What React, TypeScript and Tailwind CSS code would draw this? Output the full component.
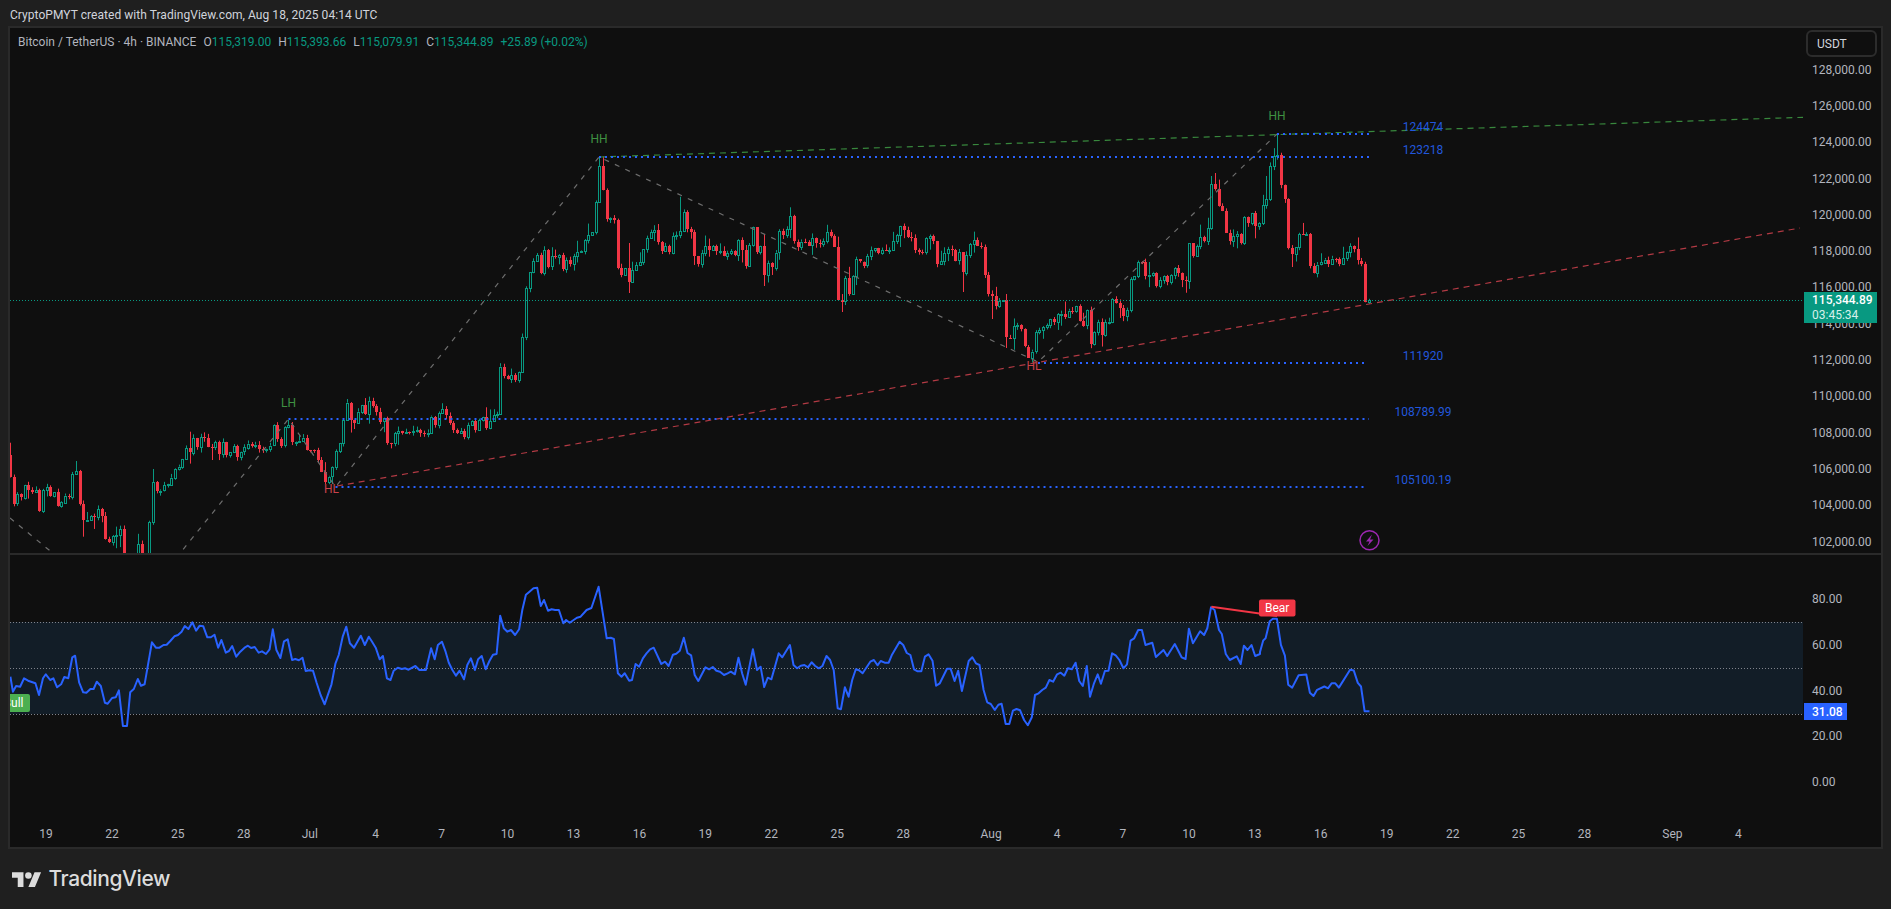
const FONT = 'font-["Roboto","Liberation_Sans",sans-serif]'

// closes read off the chart, per stretch of bars: y = y0 + v * s
const STRETCHES: { x0: number; y0: number; s: number; v: number[] }[] = [
  { x0: 10, y0: 400, s: 1 / 3, v: [
    230,310,283,293,255,270,275,270,332,270,262,288,277,318,307,287,290,222,214,312,360,359,348,350,327,348,416,426,408,405,388,470,
    520,540,500,432,470,465,367,247,275,272,256,253,233,207,200,177,145,158,114,142,112,113,140,141,127,162,127,165,157,138,170,155,
    142,131,137,134,146,147,146,137,76,117,137,82,76,127,125,122,113,150,150,150,180,215,245,230,202,153,130,60,8,60,68,35,15,42,3,17,
    35,65,55,130,131,100,93,100,97,98,94,90,100,100,98,50,75,40,28,47,68,
  ] },
  { x0: 453.3, y0: 0, s: 1, v: [430,433,431,437,425,421,430,420,417,428,421,415,414] },
  { x0: 500.3, y0: 150, s: 1 / 3, v: [
    650,678,688,676,690,667,562,415,367,333,316,369,300,350,319,321,316,357,330,342,319,307,304,271,255,247,157,48,120,207,204,210,
    353,375,355,396,360,346,336,298,265,247,240,276,303,289,308,258,256,244,186,238,246,318,342,310,289,300,289,305,304,318,310,304,
    315,270,300,348,286,232,306,289,375,340,
  ] },
  { x0: 772, y0: 190, s: 1 / 3, v: [
    232,188,124,137,118,79,155,170,155,155,167,145,160,163,154,126,137,170,330,335,265,312,258,208,215,227,199,181,175,190,180,182,181,
    154,136,108,119,141,143,179,185,185,144,138,154,222,214,190,178,180,212,187,248,195,163,151,168,170,254,311,317,347,333,331,443,443,
    408,405,418,470,503,485,427,421,412,405,388,397,373,371,380,362,363,348,392,407,361,464,427,397,435,396,395,
  ] },
  { x0: 1112.3, y0: 130, s: 1 / 3, v: [
    507,518,533,558,540,448,438,396,397,438,434,428,468,451,438,456,436,415,430,450,453,340,378,349,322,333,295,163,177,227,243,308,333,
    319,313,340,262,279,250,288,280,226,208,108,78,76,165,207,353,372,352,312,313,312,407,427,404,397,389,400,386,387,402,385,367,349,
    358,392,401,515,510,
  ] },
]

// long wicks that stand out: [x, high, low]
const WICKS: [number, number | null, number | null][] = [
  [75.7, 461, null], [83, null, 536.7], [152, 469, null], [189, 431.7, null], [211, null, 460], [288.7, 420, null], [332.7, null, 484],
  [600, 157, null], [629, 243, 293], [680, 196.7, null], [764.6, null, 286], [841, null, 312], [962, null, 292], [991, null, 319],
  [1006, 294, 348], [1032, null, 362.5], [1211, 176, null], [1215, 173, null], [1266, 176, null], [1277, 135, null], [1292, null, 267],
]

type Bar = { x: number; o: number; c: number; hi: number; lo: number }

function buildBars() {
  let seed = 7
  const rnd = () => (seed = (seed * 16807) % 2147483647) / 2147483647
  const wick = () => { const a = rnd(), b = rnd(); return a < 0.15 ? 4 + b * 9 : b * 4 }
  const bars: Bar[] = []
  let prev = 455
  STRETCHES.forEach(st => st.v.forEach((n, i) => {
    const c = st.y0 + n * st.s
    bars.push({ x: st.x0 + i * 3.664, o: prev, c, hi: Math.min(prev, c) - wick(), lo: Math.max(prev, c) + wick() })
    prev = c
  }))
  WICKS.forEach(([x, hi, lo]) => {
    const b = bars.reduce((m, r) => (Math.abs(r.x - x) < Math.abs(m.x - x) ? r : m), bars[0])
    if (hi !== null) b.hi = hi
    if (lo !== null) b.lo = lo
  })
  return bars
}

const BARS = buildBars()

const RSI_A = [26,290,32,335,40,318,50,320,60,295,70,302,88,310,97,345,107,295,114,283,125,300,133,295,142,322,152,313,160,291,170,295,180,232,187,227,197,307,207,337,215,338,225,327,233,327,241,305,251,318,261,368,268,371,279,354,288,352,296,331,306,438,316,438,324,337,333,327,343,297,351,317,360,313,378,187,388,203,397,203,407,195,415,194,424,183,434,169,443,165,452,155,460,138,469,147,479,127,488,152,497,137,506,139,516,172,525,172,534,164,543,203,551,180,562,218,570,213,578,198,588,230,598,215,610,202,617,197,625,204,634,201,644,218,652,214,662,222,671,208,679,148,688,210,698,234,707,184,716,178,727,240,735,237,744,241,753,233,761,273,770,271,779,272,788,308,798,345,808,373,825,313,835,250,843,225,853,170,862,140,871,190,881,203,898,167,908,195,918,170,925,183,935,203,945,238,953,228,963,295,972,300,980,272,990,263,1000,267,1008,265,1017,269,1034,258,1044,270,1060,270,1073,205,1082,238,1090,195,1100,185,1109,215,1117,248,1126,270,1135,287,1144,272,1155,298,1163,255,1172,235,1182,270,1190,238,1199,228,1209,268,1218,243,1227,224,1236,222,1245,107,1254,145,1263,155,1272,150,1282,165,1292,148,1300,90,1309,44,1318,35,1328,25,1337,23,1346,78,1354,60,1364,92,1373,88,1382,90,1391,90,1402,130,1409,120,1418,128,1436,113,1445,110,1460,90,1472,84,1490,20,1510,175,1520,173,1528,177,1538,280,1547,290,1555,280,1566,302]
const RSI_B = [5,300,14,252,23,260,32,235,41,220,50,208,59,203,78,252,87,245,96,258,107,224,115,221,124,212,134,173,143,219,152,226,161,285,170,303,188,262,197,268,206,261,215,272,224,275,234,285,243,280,251,275,261,283,270,233,279,280,288,314,306,208,316,270,325,260,334,321,343,293,352,298,370,220,379,232,398,195,407,255,416,265,425,257,434,255,443,262,452,247,461,258,470,265,479,258,489,228,498,240,507,270,517,385,525,388,535,322,544,350,553,300,562,268,570,271,579,280,598,245,607,240,616,256,624,243,634,248,644,248,652,224,671,185,680,195,689,219,698,225,707,268,716,274,725,274,734,230,743,223,753,242,762,317,771,310,789,266,798,266,808,303,817,272,826,333,843,243,852,232,861,250,870,255,880,330,889,367,898,372,908,390,917,374,925,371,935,432,944,432,953,392,962,387,971,391,981,420,990,436,1000,412,1008,345,1017,340,1026,330,1035,323,1044,300,1053,305,1063,283,1072,278,1081,287,1090,265,1100,268,1109,248,1118,303,1127,318,1137,258,1145,350,1155,310,1164,283,1172,311,1182,273,1191,272,1200,220,1209,226,1218,240,1228,265,1237,253,1246,182,1255,175,1265,150,1274,150,1283,195,1300,188,1309,231,1328,210,1337,228,1356,192,1373,232,1383,237,1391,146,1401,190,1419,154,1429,165,1437,145,1446,82,1455,90,1466,150,1473,162,1483,222,1493,240,1510,229,1520,252,1528,197,1537,210,1547,195,1556,228,1568,222]
const RSI_C = [0,860,8,828,14,822,24,775,32,768,42,768,52,840,62,870,70,950,80,958,96,924,115,922,124,972,133,981,142,964,160,955,169,960,178,946,187,946,196,958,224,909,233,911,243,945,251,955,260,1023,272,1023]

function rsiPath() {
  const pts: string[] = []
  const add = (arr: number[], fx: (n: number) => number, fy: (n: number) => number) => {
    for (let i = 0; i < arr.length; i += 2) pts.push(`${fx(arr[i]).toFixed(1)},${fy(arr[i + 1]).toFixed(1)}`)
  }
  add(RSI_A, n => n / 2.489, n => 580 + n / 3)
  add(RSI_B, n => 630 + n / 2.489, n => 580 + n / 3)
  add(RSI_C, n => 1260 + n / 2.485, n => 340 + n / 2.756)
  return 'M' + pts.join('L')
}

const PRICES = ['128,000.00','126,000.00','124,000.00','122,000.00','120,000.00','118,000.00','116,000.00','114,000.00','112,000.00','110,000.00','108,000.00','106,000.00','104,000.00','102,000.00']
const RSI_TICKS = ['80.00','60.00','40.00','20.00','0.00']
const LEVELS = [
  { x1: 1277, x2: 1369.5, y: 134, label: '124474', ty: 126.7 },
  { x1: 599, x2: 1369.5, y: 157, label: '123218', ty: 149.7 },
  { x1: 1038, x2: 1367, y: 363, label: '111920', ty: 355.6 },
  { x1: 288.5, x2: 1369, y: 419, label: '108789.99', ty: 411.5 },
  { x1: 335.5, x2: 1366, y: 487, label: '105100.19', ty: 479.7 },
]
const OHLC = [['O', '115,319.00'], ['H', '115,393.66'], ['L', '115,079.91'], ['C', '115,344.89']]

function Candles() {
  return (
    <>
      {BARS.map((b, i) => {
        const x = Math.round(b.x) + 0.5
        const up = b.c < b.o
        const top = Math.min(b.o, b.c)
        const h = Math.max(Math.abs(b.o - b.c), 1)
        return up ? (
          <g key={i} stroke="#089981" fill="none">
            <path d={`M${x} ${b.hi}V${top}M${x} ${top + h}V${b.lo}`} />
            <rect x={x - 1} y={Math.round(top) + 0.5} width={2} height={Math.max(Math.round(h), 1)} fill="#0f0f0f" />
          </g>
        ) : (
          <g key={i}>
            <path d={`M${x} ${b.hi}V${b.lo}`} stroke="#f23645" />
            <rect x={x - 1.5} y={Math.round(top)} width={3} height={Math.max(Math.round(h), 1)} fill="#f23645" />
          </g>
        )
      })}
    </>
  )
}

function MainChart() {
  return (
    <svg viewBox="10 28 1793 525" className="w-[1793px] h-[525px] shrink-0">
      <Candles />
      <path d="M10 300.5H1803" stroke="#089981" strokeDasharray="1 2" />
      <path d="M10 518L110 600L181 552L288.5 419L335.5 487L599 157L1038 362L1277 134" fill="none" stroke="#6e6e6e" strokeWidth={1.2} strokeDasharray="5 6.5" />
      <path d="M599 157L1803 117.3" stroke="#38883d" strokeWidth={1.2} strokeDasharray="6 5" />
      <path d="M337 486L1800 228" stroke="#b23a44" strokeWidth={1.2} strokeDasharray="6 5" />
      {LEVELS.map(l => (
        <g key={l.label}>
          <path d={`M${l.x1} ${l.y}H${l.x2}`} stroke="#2962ff" strokeWidth={2} strokeDasharray="2 4" />
          <text x={1423} y={l.ty + 4} textAnchor="middle" className="fill-[#2257dc] text-[12px]">{l.label}</text>
        </g>
      ))}
      <text x={599} y={143} textAnchor="middle" className="fill-[#3f9142] text-[12px]">HH</text>
      <text x={1277} y={120} textAnchor="middle" className="fill-[#3f9142] text-[12px]">HH</text>
      <text x={288.5} y={407} textAnchor="middle" className="fill-[#3f9142] text-[12px]">LH</text>
      <text x={331.5} y={493} textAnchor="middle" className="fill-[#c9424c] text-[12px]">HL</text>
      <text x={1034} y={370} textAnchor="middle" className="fill-[#c9424c] text-[12px]">HL</text>
      <circle cx={1369.5} cy={540.3} r={9.5} fill="none" stroke="#9c27b0" strokeWidth={1.5} />
      <path d="M1372 534.5L1366 541.5H1369.5L1367.5 546L1373.5 539.5H1370Z" fill="#9c27b0" />
    </svg>
  )
}

function RsiChart() {
  return (
    <svg viewBox="10 555 1793 265" className="w-[1793px] h-[265px] shrink-0">
      <rect x={10} y={622} width={1793} height={92} fill="#121d27" />
      {[622.5, 668.5, 714.5].map(y => (
        <path key={y} d={`M10 ${y}H1803`} stroke="#80838c" strokeDasharray="1 2" />
      ))}
      <path d={rsiPath()} fill="none" stroke="#2962ff" strokeWidth={2} strokeLinejoin="round" />
      <path d="M1211.4 606.7L1277 616" stroke="#f23645" strokeWidth={2} />
      <rect x={1259} y={599.5} width={36.5} height={17} rx={2} fill="#f23645" />
      <text x={1277.2} y={612} textAnchor="middle" className="fill-white text-[12px]">Bear</text>
      <rect x={0} y={694} width={30} height={18} rx={2} fill="#4caf50" />
      <text x={23.5} y={707} textAnchor="end" className="fill-white text-[12px]">Bull</text>
    </svg>
  )
}

function TimeAxis() {
  const cell = 'w-[65.95px] shrink-0 text-center'
  return (
    <div className="h-[27px] flex items-center pl-[3px] text-[#b2b5be] overflow-hidden">
      {['19','22','25','28','Jul','4','7','10','13','16','19','22','25','28'].map((t, i) => (
        <div key={i} className={cell}>{t}</div>
      ))}
      <div className="w-[22px] shrink-0" />
      {['Aug','4','7','10','13','16','19','22','25','28'].map((t, i) => (
        <div key={i} className={cell}>{t}</div>
      ))}
      <div className="w-[22px] shrink-0" />
      {['Sep','4'].map((t, i) => (
        <div key={i} className={cell}>{t}</div>
      ))}
    </div>
  )
}

export default function App() {
  return (
    <div className={`${FONT} h-[909px] bg-[#1f1f1f] flex flex-col overflow-hidden text-[12px]`}>
      <div className="h-[26px] flex items-center pl-[10px] pt-[4px] text-[#d1d4dc] tracking-[0.05px]">
        CryptoPMYT created with TradingView.com, Aug 18, 2025 04:14 UTC
      </div>

      <div className="ml-[8px] w-[1875px] h-[823px] border-2 border-[#2a2a2a] bg-[#0f0f0f] flex flex-col">
        <div className="relative h-[525px] flex shrink-0">
          <MainChart />
          <div className="flex-1 pt-[23.5px] text-[#b2b5be]">
            {PRICES.map(p => (
              <div key={p} className="h-[36.3px] flex items-center pl-[9px]">{p}</div>
            ))}
          </div>

          {/* legend, over the chart */}
          <div className="absolute top-[6px] left-[8px] h-[16px] flex items-center text-[#b2b5be]">
            <span className="mr-[7px]">Bitcoin / TetherUS · 4h · BINANCE</span>
            {OHLC.map(([k, v]) => (
              <span key={k} className="mr-[7px]">{k}<span className="text-[#089981]">{v}</span></span>
            ))}
            <span className="text-[#089981]">+25.89 (+0.02%)</span>
          </div>

          <div className="absolute top-[2px] left-[1796px] w-[71px] h-[27px] flex items-center pl-[9px] border-2 border-[#2c2c2c] rounded-md text-[#d1d4dc]">
            USDT
          </div>
          <div className="absolute top-[264px] left-[1794px] w-[73px] h-[31px] pl-[8px] bg-[#089981] flex flex-col justify-center leading-[15px]">
            <span className="text-white font-medium">115,344.89</span>
            <span className="text-[#d6f0ea]">03:45:34</span>
          </div>
        </div>

        <div className="h-[2px] bg-[#2a2a2a] shrink-0" />

        <div className="relative h-[265px] flex shrink-0">
          <RsiChart />
          <div className="flex-1 pt-[21.6px] text-[#b2b5be]">
            {RSI_TICKS.map(t => (
              <div key={t} className="h-[45.6px] flex items-center pl-[9px]">{t}</div>
            ))}
          </div>
          <div className="absolute top-[148px] left-[1794px] w-[43px] h-[17px] pl-[8px] flex items-center bg-[#2962ff] text-white font-medium">
            31.08
          </div>
        </div>

        <TimeAxis />
      </div>

      <div className="flex-1 flex items-center pl-[12px] gap-[7px] text-[#dcdcdc]">
        <svg viewBox="0 4 36 18" className="w-[29.5px] h-[15px] shrink-0" fill="currentColor">
          <path d="M14 22H7V11H0V4h14v18zM28 22h-8l7.5-18h8L28 22z" />
          <circle cx="20" cy="8" r="4" />
        </svg>
        <span className='font-["Inter",sans-serif] font-medium text-[21px] tracking-[-0.4px]'>TradingView</span>
      </div>
    </div>
  )
}
